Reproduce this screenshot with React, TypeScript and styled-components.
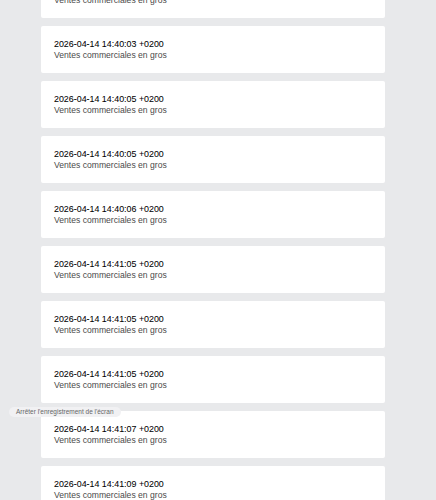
import React from "react";
import styled, { createGlobalStyle } from "styled-components";

const Global = createGlobalStyle`
  html, body { margin: 0; padding: 0; background: #e8e9eb; overflow: hidden; }
  body { font-family: "Liberation Sans", Arial, sans-serif; }
`;

const Page = styled.div`
  position: relative;
  width: 436px;
  height: 500px;
  overflow: hidden;
  background: #e8e9eb;
`;

const List = styled.div`
  display: flex;
  flex-direction: column;
  gap: 8px;
  margin-top: -29px;
  padding-left: 41px;
  width: 344px;
`;

const Card = styled.div`
  background: #ffffff;
  border-radius: 2px;
  height: 47px;
  box-sizing: border-box;
  padding: 13px 13px 0;
  display: flex;
  flex-direction: column;
`;

const DateLine = styled.div`
  font-size: 8.9px;
  line-height: 11px;
  color: #000;
  -webkit-text-stroke: 0.05px #000;
`;

const Sub = styled.div`
  font-size: 8.6px;
  line-height: 11px;
  color: #4a4a4a;
`;

const Pill = styled.div`
  position: absolute;
  left: 9px;
  top: 407px;
  height: 10px;
  padding: 0 7px;
  border-radius: 5px;
  background: #f1f1f3;
  font-size: 6.5px;
  line-height: 10px;
  color: #666;
  white-space: nowrap;
`;

const dates = [
  "2026-04-14 14:40:01 +0200",
  "2026-04-14 14:40:03 +0200",
  "2026-04-14 14:40:05 +0200",
  "2026-04-14 14:40:05 +0200",
  "2026-04-14 14:40:06 +0200",
  "2026-04-14 14:41:05 +0200",
  "2026-04-14 14:41:05 +0200",
  "2026-04-14 14:41:05 +0200",
  "2026-04-14 14:41:07 +0200",
  "2026-04-14 14:41:09 +0200",
];

export default function App() {
  return (
    <Page>
      <Global />
      <List>
        {dates.map((d, i) => (
          <Card key={i}>
            <DateLine>{d}</DateLine>
            <Sub>Ventes commerciales en gros</Sub>
          </Card>
        ))}
      </List>
      <Pill>Arrêter l'enregistrement de l'écran</Pill>
    </Page>
  );
}
